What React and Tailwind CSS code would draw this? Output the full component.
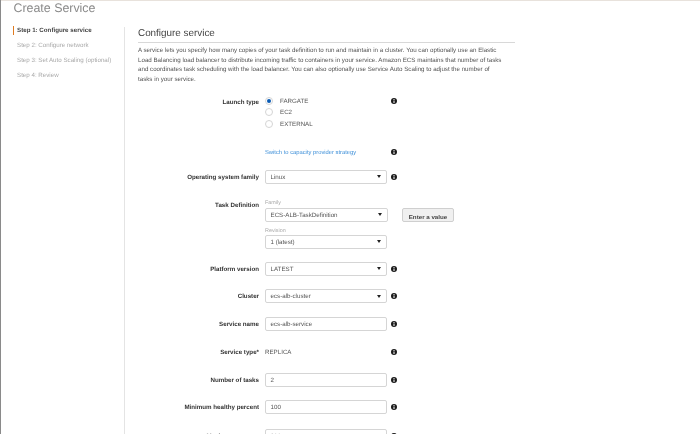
import React from "react";

const Info = ({ className = "" }) => (
  <svg viewBox="0 0 12 12" className={"w-[6px] h-[6px] shrink-0 " + className}>
    <circle cx="6" cy="6" r="6" fill="#1b1b1b" />
    <rect x="5" y="2" width="2" height="2" fill="#fff" />
    <rect x="5" y="5" width="2" height="5" fill="#fff" />
  </svg>
);

const Row = ({ label, children, info = true, mt, cls = "items-center", infoCls = "" }) => (
  <div className={"flex " + cls + " " + mt}>
    <div className="w-[140px] pr-[6px] pt-[1px] text-right font-bold text-[#333] text-[6.2px] leading-[14px] h-[14px] whitespace-nowrap">{label}</div>
    <div className="w-[123px] leading-[14px]">{children}</div>
    {info && <Info className={"ml-[3px] " + infoCls} />}
  </div>
);

const Select = ({ value, w = "w-[122px]" }) => (
  <div className={"h-[14px] bg-white border border-[#d5d5d5] rounded-[2px] flex items-center justify-between pl-[4.5px] pr-[5px] text-[6.2px] text-[#555] shrink-0 " + w}>
    <span className="pt-[2px]">{value}</span>
    <span className="w-0 h-0 border-x-[2.5px] border-x-transparent border-t-[3px] border-t-[#222]" />
  </div>
);

const Input = ({ value }) => (
  <div className="h-[14px] w-[122px] bg-white border border-[#d5d5d5] rounded-[2px] flex items-center pl-[4.5px] pt-[2px] text-[6.2px] text-[#555]">{value}</div>
);

const Radio = ({ label, on }) => (
  <div className="flex items-center h-[11.5px]">
    <span className="w-[8px] h-[8px] rounded-full border border-[#d5d5d5] flex items-center justify-center shrink-0">
      {on && <span className="w-[4px] h-[4px] rounded-full bg-[#0a5bb5]" />}
    </span>
    <span className="ml-[7px] pt-[2px] text-[6.2px] text-[#555]">{label}</span>
  </div>
);

const Step = ({ children, active }) => (
  <div className={"h-[9px] mb-[6px] flex items-center text-[6.2px] whitespace-nowrap " + (active ? "font-bold text-[#444] border-l border-[#e07b20] pl-[3px]" : "text-[#aaa] pl-[4px]")}>
    {children}
  </div>
);

export default function App() {
  return (
    <div className="w-[700px] h-[434px] overflow-hidden bg-white border-l border-l-[#8a8a8a] blur-[0.25px] [text-rendering:geometricPrecision]" style={{ fontFamily: '"Liberation Sans", Arial, sans-serif' }}>
      <div className="h-[1px] bg-[#e8e2dc]" />
      <h1 className="ml-[12.5px] h-[13px] pt-[1px] text-[12.4px] leading-[13px] text-[#8a8a8a]">Create Service</h1>
      <div className="flex mt-[13px] h-[420px]">
        <aside className="w-[111px] ml-[12px]">
          <div className="-mt-[1px]">
            <Step active>Step 1: Configure service</Step>
            <Step>Step 2: Configure network</Step>
            <Step>Step 3: Set Auto Scaling (optional)</Step>
            <Step>Step 4: Review</Step>
          </div>
        </aside>
        <main className="border-l border-l-[#e4e4e4] pl-[13px] w-[391px]">
          <h2 className="text-[9.9px] leading-[12px] pt-[1px] text-[#444] border-b border-b-[#d8d8d8] h-[16px]">Configure service</h2>
          <p className="mt-[3px] text-[6.2px] leading-[9.5px] text-[#555] w-[365px]">
            A service lets you specify how many copies of your task definition to run and maintain in a cluster. You can optionally use an Elastic Load Balancing load balancer to distribute incoming traffic to containers in your service. Amazon ECS maintains that number of tasks and coordinates task scheduling with the load balancer. You can also optionally use Service Auto Scaling to adjust the number of tasks in your service.
          </p>
          <div className="-ml-[13px]">
            <Row label="Launch type" mt="mt-[11px]" cls="items-start" infoCls="mt-[3px]">
              <Radio label="FARGATE" on />
              <Radio label="EC2" />
              <Radio label="EXTERNAL" />
            </Row>
            <Row label="" mt="mt-[15px]">
              <a className="block pt-[1px] text-[5.8px] leading-[14px] h-[14px] text-[#3b8ed8] whitespace-nowrap">Switch to capacity provider strategy</a>
            </Row>
            <Row label="Operating system family" mt="mt-[11px]"><Select value="Linux" /></Row>
            <Row label="Task Definition" info={false} mt="mt-[14px]" cls="items-start">
              <div className="text-[5.4px] leading-[7px] text-[#aaa] mt-[2px]">Family</div>
              <div className="flex mt-[1px]">
                <Select value="ECS-ALB-TaskDefinition" w="w-[123px]" />
                <button className="ml-[14px] shrink-0 h-[14px] w-[52px] bg-[#f0f0f0] border border-[#cfcfcf] rounded-[2px] pt-[1px] text-[6.2px] font-bold text-[#444]">Enter a value</button>
              </div>
              <div className="text-[5.4px] leading-[7px] text-[#aaa] mt-[6px]">Revision</div>
              <div><Select value="1 (latest)" /></div>
            </Row>
            <Row label="Platform version" mt="mt-[13px]"><Select value="LATEST" /></Row>
            <Row label="Cluster" mt="mt-[13.5px]"><Select value="ecs-alb-cluster" /></Row>
            <Row label="Service name" mt="mt-[14px]"><Input value="ecs-alb-service" /></Row>
            <Row label="Service type*" mt="mt-[14px]"><span className="block pt-[1px] h-[14px] text-[6.2px] leading-[14px] text-[#555]">REPLICA</span></Row>
            <Row label="Number of tasks" mt="mt-[14px]"><Input value="2" /></Row>
            <Row label="Minimum healthy percent" mt="mt-[13px]"><Input value="100" /></Row>
            <Row label="Maximum percent" mt="mt-[14.5px]"><Input value="200" /></Row>
          </div>
        </main>
      </div>
    </div>
  );
}
